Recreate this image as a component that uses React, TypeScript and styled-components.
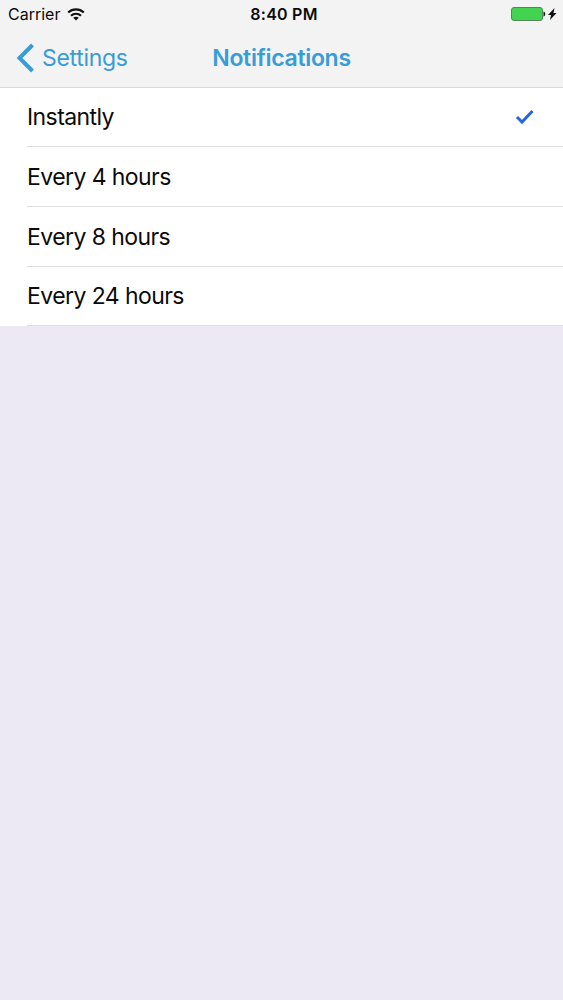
import React from 'react';
import styled, { createGlobalStyle } from 'styled-components';

const GlobalStyle = createGlobalStyle`
  * { box-sizing: border-box; }
  body { margin: 0; background: #ece9f4; font-family: Inter, "Liberation Sans", sans-serif; }
`;

const Screen = styled.main`
  display: flex;
  flex-direction: column;
  height: 1000px;
  overflow: hidden;
  background: #ece9f4;
  color: #0b0b0b;
`;

const Header = styled.header`
  flex: none;
  height: 87.5px;
  background: #f3f3f4;
  border-bottom: 1px solid #d8d8d9;
`;

const StatusBar = styled.div`
  display: grid;
  grid-template-columns: 1fr auto 1fr;
  align-items: center;
  height: 28px;
  padding: 0 6px 0 8px;
  font-size: 16px;
`;

const Carrier = styled.div`
  display: flex;
  align-items: center;
  gap: 7px;
`;

const Clock = styled.span`
  padding-left: 3px;
  font-size: 16px;
  font-weight: 600;
  letter-spacing: 0.25px;
`;

const Power = styled.div`
  display: flex;
  justify-content: flex-end;
`;

const NavBar = styled.nav`
  display: grid;
  grid-template-columns: 1fr auto 1fr;
  align-items: center;
  height: 59px;
  padding: 0 16px;
  color: #389cd6;
  font-size: 23px;
  letter-spacing: -0.3px;
`;

const BackButton = styled.a`
  display: flex;
  align-items: center;
  gap: 7px;
`;

const Title = styled.h1`
  margin: 0;
  font-size: 23px;
  font-weight: 600;
`;

const Options = styled.ul`
  margin: 0;
  padding: 0 0 0 27px;
  list-style: none;
  background: #fff;
`;

const Option = styled.li`
  display: flex;
  align-items: center;
  justify-content: space-between;
  height: 59.7px;
  padding: 1px 29px 0 0;
  border-bottom: 1px solid #dedee1;
  font-size: 23px;
  letter-spacing: -0.58px;
  white-space: nowrap;
`;

const options = [
  { label: 'Instantly', selected: true },
  { label: 'Every 4 hours' },
  { label: 'Every 8 hours' },
  { label: 'Every 24 hours' },
];

export default function App() {
  return (
    <Screen>
      <GlobalStyle />
      <Header>
        <StatusBar>
          <Carrier>
            Carrier
            <svg width="18" height="13" viewBox="0 0 18 13" fill="none" stroke="#111" strokeWidth="2.200">
              <path d="M1.200 4.500C5.500.400 12.500.400 16.800 4.500M4 7.700c2.800-2.600 7.200-2.600 10 0" />
              <path d="M9 12.400 6.200 9.700c1.600-1.400 4-1.400 5.600 0Z" fill="#111" stroke="none" />
            </svg>
          </Carrier>
          <Clock>8:40 PM</Clock>
          <Power>
            <svg width="46" height="14" viewBox="0 0 46 14">
              <rect x=".5" y=".5" width="31" height="13" rx="2.500" fill="#42d451" stroke="#53865a" />
              <path d="M32.500 4.500c2.300.5 2.300 4.500 0 5Z" fill="#111" />
              <path d="m43.500 1-6.500 7h3l-1 5 6.500-7h-3Z" fill="#111" />
            </svg>
          </Power>
        </StatusBar>
        <NavBar>
          <BackButton>
            <svg width="19" height="30" viewBox="0 0 19 30" fill="none" stroke="#389cd6" strokeWidth="4">
              <path d="M16.500 2 3.500 15l13 13" />
            </svg>
            Settings
          </BackButton>
          <Title>Notifications</Title>
        </NavBar>
      </Header>
      <Options>
        {options.map(({ label, selected }) => (
          <Option key={label}>
            <span>{label}</span>
            {selected && (
              <svg width="19" height="16" viewBox="0 0 19 16" fill="none" stroke="#2468df" strokeWidth="3">
                <path d="m2 8 5 5L17.500 2" />
              </svg>
            )}
          </Option>
        ))}
      </Options>
    </Screen>
  );
}
